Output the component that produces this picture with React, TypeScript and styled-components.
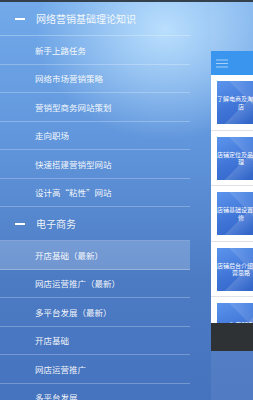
import styled, { createGlobalStyle } from "styled-components";

const GlobalStyle = createGlobalStyle`
  html, body {
    margin: 0;
    padding: 0;
    overflow: hidden;
  }
  body {
    font-family: "Noto Sans CJK SC", "Noto Sans", sans-serif;
  }
`;

const Screen = styled.div`
  width: 253px;
  height: 400px;
  display: flex;
  flex-direction: column;
  overflow: hidden;
  background:
    radial-gradient(ellipse 130px 110px at 165px 30px, rgba(190, 226, 255, 0.95), rgba(190, 226, 255, 0) 100%),
    linear-gradient(180deg, #72aaea 0%, #6196dc 35%, #4c7bc4 70%, #4673be 100%);
`;

const StatusStrip = styled.div`
  height: 2px;
  flex-shrink: 0;
  background: #34404c;
`;

const Body = styled.div`
  flex: 1;
  display: flex;
  flex-direction: row;
  min-height: 0;
`;

const Menu = styled.div`
  width: 190px;
  flex-shrink: 0;
  display: flex;
  flex-direction: column;
  overflow: hidden;
`;

const GroupHeader = styled.div`
  height: 34px;
  flex-shrink: 0;
  display: flex;
  align-items: center;
  border-bottom: 1px solid rgba(255, 255, 255, 0.28);
  box-sizing: border-box;
  color: rgba(255, 255, 255, 0.92);
  font-size: 10px;
`;

const Dash = styled.span`
  width: 10px;
  height: 2px;
  margin: 0 11px 0 15px;
  background: #fff;
`;

const MenuItem = styled.div<{ $active?: boolean }>`
  height: 28.5px;
  flex-shrink: 0;
  display: flex;
  align-items: center;
  padding-left: 35px;
  box-sizing: border-box;
  border-bottom: 1px solid rgba(255, 255, 255, 0.25);
  background: ${(p) => (p.$active ? "rgba(255, 255, 255, 0.2)" : "transparent")};
  color: rgba(255, 255, 255, 0.95);
  font-size: 8.5px;
  white-space: nowrap;
`;

const Preview = styled.div`
  margin-left: 21px;
  flex: 1;
  display: flex;
  flex-direction: column;
  min-width: 0;
  overflow: hidden;
  background: linear-gradient(180deg, rgba(255, 255, 255, 0.04), rgba(255, 255, 255, 0.06));
`;

const PreviewTop = styled.div`
  height: 49px;
  flex-shrink: 0;
`;

const AppBar = styled.div`
  height: 24px;
  flex-shrink: 0;
  display: flex;
  align-items: center;
  padding-left: 5px;
  background: #3a95ee;
`;

const CardList = styled.div`
  height: 248px;
  flex-shrink: 0;
  background: #f6f7f9;
  overflow: hidden;
`;

const Card = styled.div`
  padding: 6px 0 5.5px 6px;
  border-bottom: 1px solid #dfe2e6;
  background: #fff;
`;

const Thumb = styled.div`
  width: 48px;
  height: 43px;
  display: flex;
  align-items: center;
  justify-content: center;
  text-align: center;
  box-sizing: border-box;
  color: #fff;
  font-size: 6px;
  line-height: 7.5px;
  background:
    linear-gradient(135deg, rgba(255, 255, 255, 0) 55%, rgba(255, 255, 255, 0.14) 56%, rgba(255, 255, 255, 0) 80%),
    linear-gradient(45deg, rgba(255, 255, 255, 0) 60%, rgba(255, 255, 255, 0.12) 61%, rgba(255, 255, 255, 0) 85%),
    linear-gradient(160deg, #5b94ec 0%, #3f74d6 55%, #2f62c4 100%);
`;

const Toast = styled.div`
  height: 28px;
  flex-shrink: 0;
  background: #2e3234;
`;

const Hamburger = () => (
  <svg width="12" height="11" viewBox="0 0 12 11">
    <g stroke="rgba(255,255,255,0.55)" strokeWidth="1">
      <line x1="0" y1="2" x2="12" y2="2" />
      <line x1="0" y1="5.5" x2="12" y2="5.5" />
      <line x1="0" y1="9" x2="12" y2="9" />
    </g>
  </svg>
);

const groupOne = [
  "新手上路任务",
  "网络市场营销策略",
  "营销型商务网站策划",
  "走向职场",
  "快速搭建营销型网站",
  "设计高“粘性”网站",
];

const groupTwo = [
  "开店基础（最新）",
  "网店运营推广（最新）",
  "多平台发展（最新）",
  "开店基础",
  "网店运营推广",
  "多平台发展",
];

const cards = [
  "了解电商及淘宝开店",
  "店铺定位及品牌管理",
  "店铺基础设置与装修",
  "店铺后台介绍与运营思路",
  "淘宝SEO",
];

const App = () => {
  return (
    <Screen>
      <GlobalStyle />
      <StatusStrip />
      <Body>
        <Menu>
          <GroupHeader>
            <Dash />
            网络营销基础理论知识
          </GroupHeader>
          {groupOne.map((t) => (
            <MenuItem key={t}>{t}</MenuItem>
          ))}
          <GroupHeader>
            <Dash />
            电子商务
          </GroupHeader>
          {groupTwo.map((t, i) => (
            <MenuItem key={t} $active={i === 0}>
              {t}
            </MenuItem>
          ))}
        </Menu>
        <Preview>
          <PreviewTop />
          <AppBar>
            <Hamburger />
          </AppBar>
          <CardList>
            {cards.map((c) => (
              <Card key={c}>
                <Thumb>{c}</Thumb>
              </Card>
            ))}
          </CardList>
          <Toast />
        </Preview>
      </Body>
    </Screen>
  );
};

export default App;
